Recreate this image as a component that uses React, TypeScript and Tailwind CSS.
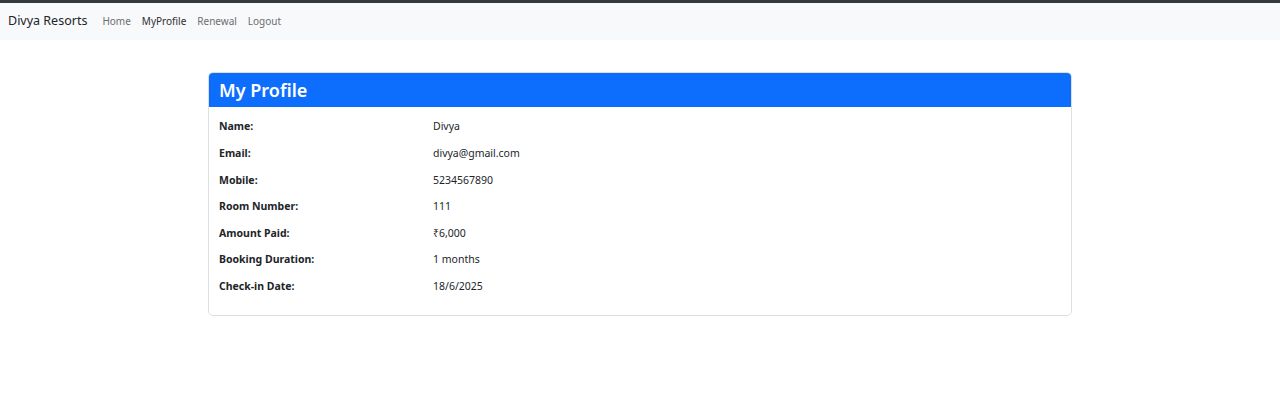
import React from "react";

const rows: [string, string][] = [
  ["Name:", "Divya"],
  ["Email:", "divya@gmail.com"],
  ["Mobile:", "5234567890"],
  ["Room Number:", "111"],
  ["Amount Paid:", "₹6,000"],
  ["Booking Duration:", "1 months"],
  ["Check-in Date:", "18/6/2025"],
];

export default function App() {
  return (
    <div className="min-h-[415px] bg-white" style={{ fontFamily: '"Noto Sans", "Open Sans", sans-serif' }}>
      <div className="h-[3px] bg-[#343a40]" />
      <nav className="flex h-[37px] items-center bg-[#f8f9fa] pl-2">
        <span className="mr-[15px] text-[12.5px] text-[#212529]">Divya Resorts</span>
        <div className="flex gap-[11px] text-[10px]">
          <span className="text-[#6c6e70]">Home</span>
          <span className="text-[#2b2f33]">MyProfile</span>
          <span className="text-[#6c6e70]">Renewal</span>
          <span className="text-[#6c6e70]">Logout</span>
        </div>
      </nav>
      <div className="flex justify-center pt-[32px]">
        <div className="w-[864px] overflow-hidden rounded-[5px] border border-[#dcdfe2]">
          <div className="flex h-[34px] items-center bg-[#0d6efd] px-[10px]">
            <h1 className="text-[18px] font-semibold text-white">My Profile</h1>
          </div>
          <div className="px-[10px] pt-[7px] pb-[15px]">
            {rows.map(([k, v]) => (
              <div key={k} className="flex h-[26.6px] items-center text-[10.5px] text-[#212529]">
                <div className="w-[214px] font-bold">{k}</div>
                <div>{v}</div>
              </div>
            ))}
          </div>
        </div>
      </div>
    </div>
  );
}
